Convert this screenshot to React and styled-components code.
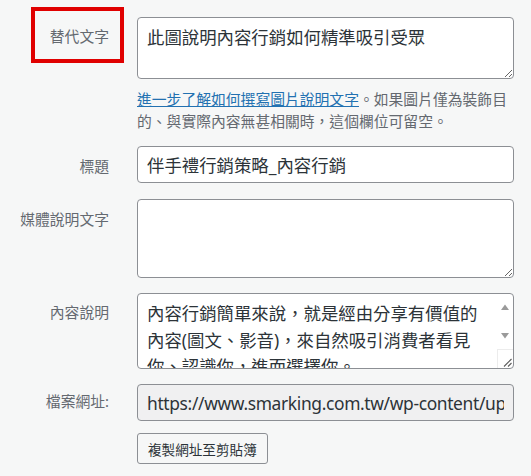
import React from "react";
import styled, { createGlobalStyle } from "styled-components";

const GlobalStyle = createGlobalStyle`
  body {
    margin: 0;
    background: #f6f7f7;
    font-family: "Noto Sans", "Noto Sans CJK TC", sans-serif;
    color: #2c3338;
  }
`;

const Page = styled.div`
  width: 531px;
  padding-top: 17px;
  box-sizing: border-box;
`;

const Row = styled.div`
  display: grid;
  grid-template-columns: 109px 377px;
  column-gap: 28px;
  margin-bottom: ${(p) => p.$gap || 0}px;
`;

const Label = styled.label`
  position: relative;
  text-align: right;
  white-space: nowrap;
  font-size: 14.8px;
  line-height: 20px;
  color: #646970;
  padding-top: ${(p) => p.$top}px;
`;

// red annotation frame drawn over the first label
const Highlight = styled.span`
  position: absolute;
  left: 31px;
  top: -10px;
  width: 93px;
  height: 56px;
  box-sizing: border-box;
  border: 4px solid #e00000;
`;

const Field = styled.div`
  display: flex;
  flex-direction: column;
  min-width: 0;
`;

const TextArea = styled.textarea`
  display: block;
  width: 100%;
  height: ${(p) => p.$h}px;
  margin: 0;
  box-sizing: border-box;
  border: 1px solid #8c8f94;
  border-radius: 4px;
  background: #fff;
  padding: 6px 9px;
  font-family: "Noto Sans", "Noto Sans CJK TC", sans-serif;
  font-size: 17.4px;
  line-height: 26.5px;
  color: #2c3338;
  resize: vertical;
  outline: none;
`;

const TextInput = styled.input`
  display: block;
  width: 100%;
  height: 37px;
  margin: 0;
  box-sizing: border-box;
  border: 1px solid #8c8f94;
  border-radius: 4px;
  background: ${(p) => (p.readOnly ? "#f0f0f1" : "#fff")};
  padding: 0 9px;
  font-family: "Noto Sans", "Noto Sans CJK TC", sans-serif;
  font-size: 17.4px;
  letter-spacing: ${(p) => (p.readOnly ? "-0.35px" : "normal")};
  color: #2c3338;
  outline: none;
`;

const Help = styled.p`
  margin: 9px 0 0;
  font-size: 14.8px;
  line-height: 22px;
  color: #646970;

  a {
    color: #2271b1;
    text-decoration: underline;
  }
`;

const ScrollBox = styled.div`
  display: flex;
  height: 76px;
  box-sizing: border-box;
  border: 1px solid #8c8f94;
  border-radius: 4px;
  background: #fff;
  overflow: hidden;
`;

const InnerText = styled.textarea`
  flex: 1;
  min-width: 0;
  height: 100%;
  margin: 0;
  box-sizing: border-box;
  border: none;
  background: transparent;
  padding: 6px 12px 0 9px;
  font-family: "Noto Sans", "Noto Sans CJK TC", sans-serif;
  font-size: 17.4px;
  line-height: 26.5px;
  color: #2c3338;
  resize: none;
  overflow: hidden;
  outline: none;
`;

const Track = styled.div`
  width: 16px;
  display: flex;
  flex-direction: column;
`;

const ArrowBtn = styled.div`
  flex: 1;
  display: flex;
  align-items: center;
  justify-content: center;
`;

const Corner = styled.div`
  height: 19px;
  box-sizing: border-box;
  border-top: 1px solid #ececec;
  border-left: 1px solid #ececec;
  display: flex;
  align-items: flex-end;
  justify-content: flex-end;
  padding: 0 1px 1px 0;
`;

const Button = styled.button`
  height: 31px;
  padding: 0 10px;
  box-sizing: border-box;
  border: 1px solid #8c8f94;
  border-radius: 3px;
  background: #f6f7f7;
  color: #2c3338;
  font-family: "Noto Sans", "Noto Sans CJK TC", sans-serif;
  font-size: 13.6px;
  justify-self: start;
  cursor: pointer;
`;

const Arrow = ({ down }) => (
  <svg width="8" height="7" viewBox="0 0 8 7">
    <path d={down ? "M0 1 H8 L4 6.5 Z" : "M0 6 H8 L4 0.5 Z"} fill="#9a9a9a" />
  </svg>
);

const Grip = () => (
  <svg width="9" height="9" viewBox="0 0 9 9">
    <path d="M1 8.5 L8.5 1 M5 8.5 L8.5 5" stroke="#5a5a5a" strokeWidth="1.1" fill="none" />
  </svg>
);

const App = () => {
  return (
    <>
      <GlobalStyle />
      <Page>
        <Row $gap={14}>
          <Label $top={9}>
            替代文字
            <Highlight />
          </Label>
          <Field>
            <TextArea $h={62} defaultValue="此圖說明內容行銷如何精準吸引受眾" />
            <Help>
              <a href="#alt">進一步了解如何撰寫圖片說明文字</a>。如果圖片僅為裝飾目的、與實際內容無甚相關時，這個欄位可留空。
            </Help>
          </Field>
        </Row>

        <Row $gap={16}>
          <Label $top={10}>標題</Label>
          <TextInput defaultValue="伴手禮行銷策略_內容行銷" />
        </Row>

        <Row $gap={15}>
          <Label $top={10}>媒體說明文字</Label>
          <TextArea $h={79} defaultValue="" />
        </Row>

        <Row $gap={15}>
          <Label $top={9}>內容說明</Label>
          <ScrollBox>
            <InnerText defaultValue="內容行銷簡單來說，就是經由分享有價值的內容(圖文、影音)，來自然吸引消費者看見你、認識你，進而選擇你。" />
            <Track>
              <ArrowBtn>
                <Arrow />
              </ArrowBtn>
              <ArrowBtn>
                <Arrow down />
              </ArrowBtn>
              <Corner>
                <Grip />
              </Corner>
            </Track>
          </ScrollBox>
        </Row>

        <Row $gap={12}>
          <Label $top={7}>檔案網址:</Label>
          <TextInput readOnly defaultValue="https://www.smarking.com.tw/wp-content/uploads/2023/05/content-marketing.jpg" />
        </Row>

        <Row>
          <span />
          <Button type="button">複製網址至剪貼簿</Button>
        </Row>
      </Page>
    </>
  );
};

export default App;
